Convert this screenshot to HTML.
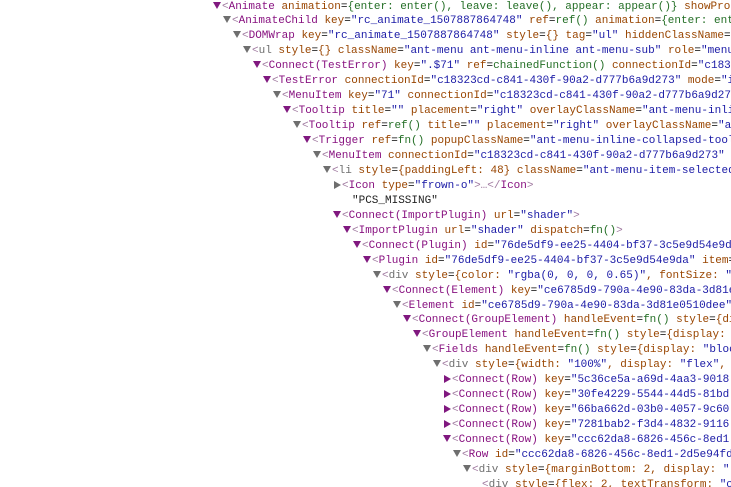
<!DOCTYPE html>
<html style="overflow:hidden"><head><meta charset="utf-8"><style>
html,body{margin:0;width:731px;height:487px;overflow:hidden;background:#fff;}
body{font-family:"Liberation Mono",monospace;font-size:11px;position:relative;}
.l{position:absolute;white-space:pre;height:15px;line-height:15px;}
.tr{position:absolute;width:0;height:0;border-left:4px solid transparent;border-right:4px solid transparent;border-top:7px solid #6e6e6e;}
.tr.p{border-top-color:#80187f;}
.rt{position:absolute;width:0;height:0;border-top:4px solid transparent;border-bottom:4px solid transparent;border-left:7px solid #6e6e6e;}
.rt.p{border-left-color:#80187f;}
.t{color:#881280}.g{color:#a07aa0}.a{color:#994500}.s{color:#1a1aa6}.f{color:#236e25}.d{color:#6e6e6e}.k{color:#222}
</style></head><body>
<div id="c"></div>
<script>
var L=[
[0,'p','<T>Animate</T> <A>animation</A>=<F>{enter: enter(), leave: leave(), appear: appear()}</F> <A>showProp</A>'],
[1,'g','<T>AnimateChild</T> <A>key</A>=<S>"rc_animate_1507887864748"</S> <A>ref</A>=<F>ref()</F> <A>animation</A>=<F>{enter: enter</F>'],
[2,'g','<T>DOMWrap</T> <A>key</A>=<S>"rc_animate_1507887864748"</S> <A>style</A>=<A>{}</A> <A>tag</A>=<S>"ul"</S> <A>hiddenClassName</A>=<S>"</S>'],
[3,'g','<D>ul</D> <A>style</A>=<A>{}</A> <A>className</A>=<S>"ant-menu ant-menu-inline ant-menu-sub"</S> <A>role</A>=<S>"menu"</S>'],
[4,'p','<T>Connect(TestError)</T> <A>key</A>=<S>".$71"</S> <A>ref</A>=<F>chainedFunction()</F> <A>connectionId</A>=<S>"c18323</S>'],
[5,'p','<T>TestError</T> <A>connectionId</A>=<S>"c18323cd-c841-430f-90a2-d777b6a9d273"</S> <A>mode</A>=<S>"inline"</S>'],
[6,'g','<T>MenuItem</T> <A>key</A>=<S>"71"</S> <A>connectionId</A>=<S>"c18323cd-c841-430f-90a2-d777b6a9d273"</S>'],
[7,'p','<T>Tooltip</T> <A>title</A>=<S>""</S> <A>placement</A>=<S>"right"</S> <A>overlayClassName</A>=<S>"ant-menu-inline</S>'],
[8,'g','<T>Tooltip</T> <A>ref</A>=<F>ref()</F> <A>title</A>=<S>""</S> <A>placement</A>=<S>"right"</S> <A>overlayClassName</A>=<S>"ant</S>'],
[9,'p','<T>Trigger</T> <A>ref</A>=<F>fn()</F> <A>popupClassName</A>=<S>"ant-menu-inline-collapsed-tooltip"</S>'],
[10,'g','<T>MenuItem</T> <A>connectionId</A>=<S>"c18323cd-c841-430f-90a2-d777b6a9d273"</S> <A>mode</A>'],
[11,'g','<D>li</D> <A>style</A>=<A>{paddingLeft: 48}</A> <A>className</A>=<S>"ant-menu-item-selected"</S>'],
[12,'r','<T>Icon</T> <A>type</A>=<S>"frown-o"</S><G>&gt;…&lt;/</G><T>Icon</T><G>&gt;</G>'],
[13,'n','<K>"PCS_MISSING"</K>'],
[12,'p','<T>Connect(ImportPlugin)</T> <A>url</A>=<S>"shader"</S><G>&gt;</G>'],
[13,'p','<T>ImportPlugin</T> <A>url</A>=<S>"shader"</S> <A>dispatch</A>=<F>fn()</F><G>&gt;</G>'],
[14,'p','<T>Connect(Plugin)</T> <A>id</A>=<S>"76de5df9-ee25-4404-bf37-3c5e9d54e9da"</S>'],
[15,'p','<T>Plugin</T> <A>id</A>=<S>"76de5df9-ee25-4404-bf37-3c5e9d54e9da"</S> <A>item</A>='],
[16,'g','<D>div</D> <A>style</A>=<A>{color: </A><S>"rgba(0, 0, 0, 0.65)"</S><A>, fontSize: </A><S>"</S>'],
[17,'p','<T>Connect(Element)</T> <A>key</A>=<S>"ce6785d9-790a-4e90-83da-3d81e0510dee"</S>'],
[18,'g','<T>Element</T> <A>id</A>=<S>"ce6785d9-790a-4e90-83da-3d81e0510dee"</S>'],
[19,'p','<T>Connect(GroupElement)</T> <A>handleEvent</A>=<F>fn()</F> <A>style</A>=<A>{display:</A>'],
[20,'p','<T>GroupElement</T> <A>handleEvent</A>=<F>fn()</F> <A>style</A>=<A>{display: </A><S>"block"</S>'],
[21,'g','<T>Fields</T> <A>handleEvent</A>=<F>fn()</F> <A>style</A>=<A>{display: </A><S>"block"</S>'],
[22,'g','<D>div</D> <A>style</A>=<A>{width: </A><S>"100%"</S><A>, display: </A><S>"flex"</S><A>,</A>'],
[23,'r','<T>Connect(Row)</T> <A>key</A>=<S>"5c36ce5a-a69d-4aa3-9018-</S>'],
[23,'r','<T>Connect(Row)</T> <A>key</A>=<S>"30fe4229-5544-44d5-81bd-</S>'],
[23,'r','<T>Connect(Row)</T> <A>key</A>=<S>"66ba662d-03b0-4057-9c60-</S>'],
[23,'r','<T>Connect(Row)</T> <A>key</A>=<S>"7281bab2-f3d4-4832-9116-</S>'],
[23,'p','<T>Connect(Row)</T> <A>key</A>=<S>"ccc62da8-6826-456c-8ed1-</S>'],
[24,'g','<T>Row</T> <A>id</A>=<S>"ccc62da8-6826-456c-8ed1-2d5e94fd</S>'],
[25,'g','<D>div</D> <A>style</A>=<A>{marginBottom: 2, display: </A><S>"</S>'],
[26,'n','<D>div</D> <A>style</A>=<A>{flex: 2, textTransform: </A><S>"c</S>']
];
var h='';
L.forEach(function(r,i){
 var x=213+r[0]*10, top=i*14.95-0.5;
 var m=r[2].replace(/<T>/g,'<span class="t">').replace(/<A>/g,'<span class="a">').replace(/<S>/g,'<span class="s">').replace(/<F>/g,'<span class="f">').replace(/<D>/g,'<span class="d">').replace(/<G>/g,'<span class="g">').replace(/<K>/g,'<span class="k">').replace(/<\/[TASFDGK]>/g,'</span>');
 var pre = (i==13) ? '' : '<span class="g">&lt;</span>';
 var tri='';
 if(r[1]=='p'||r[1]=='g') tri='<div class="tr '+(r[1]=='p'?'p':'')+'" style="left:'+x+'px;top:'+(top+2).toFixed(2)+'px"></div>';
 if(r[1]=='r') tri='<div class="rt '+(i>=23?'p':'')+'" style="left:'+(x+1)+'px;top:'+(top+2).toFixed(2)+'px"></div>';
 h+=tri+'<div class="l" style="left:'+(x+9)+'px;top:'+top.toFixed(2)+'px">'+pre+m+'</div>';
});
document.getElementById('c').innerHTML=h;
</script>
</body></html>
